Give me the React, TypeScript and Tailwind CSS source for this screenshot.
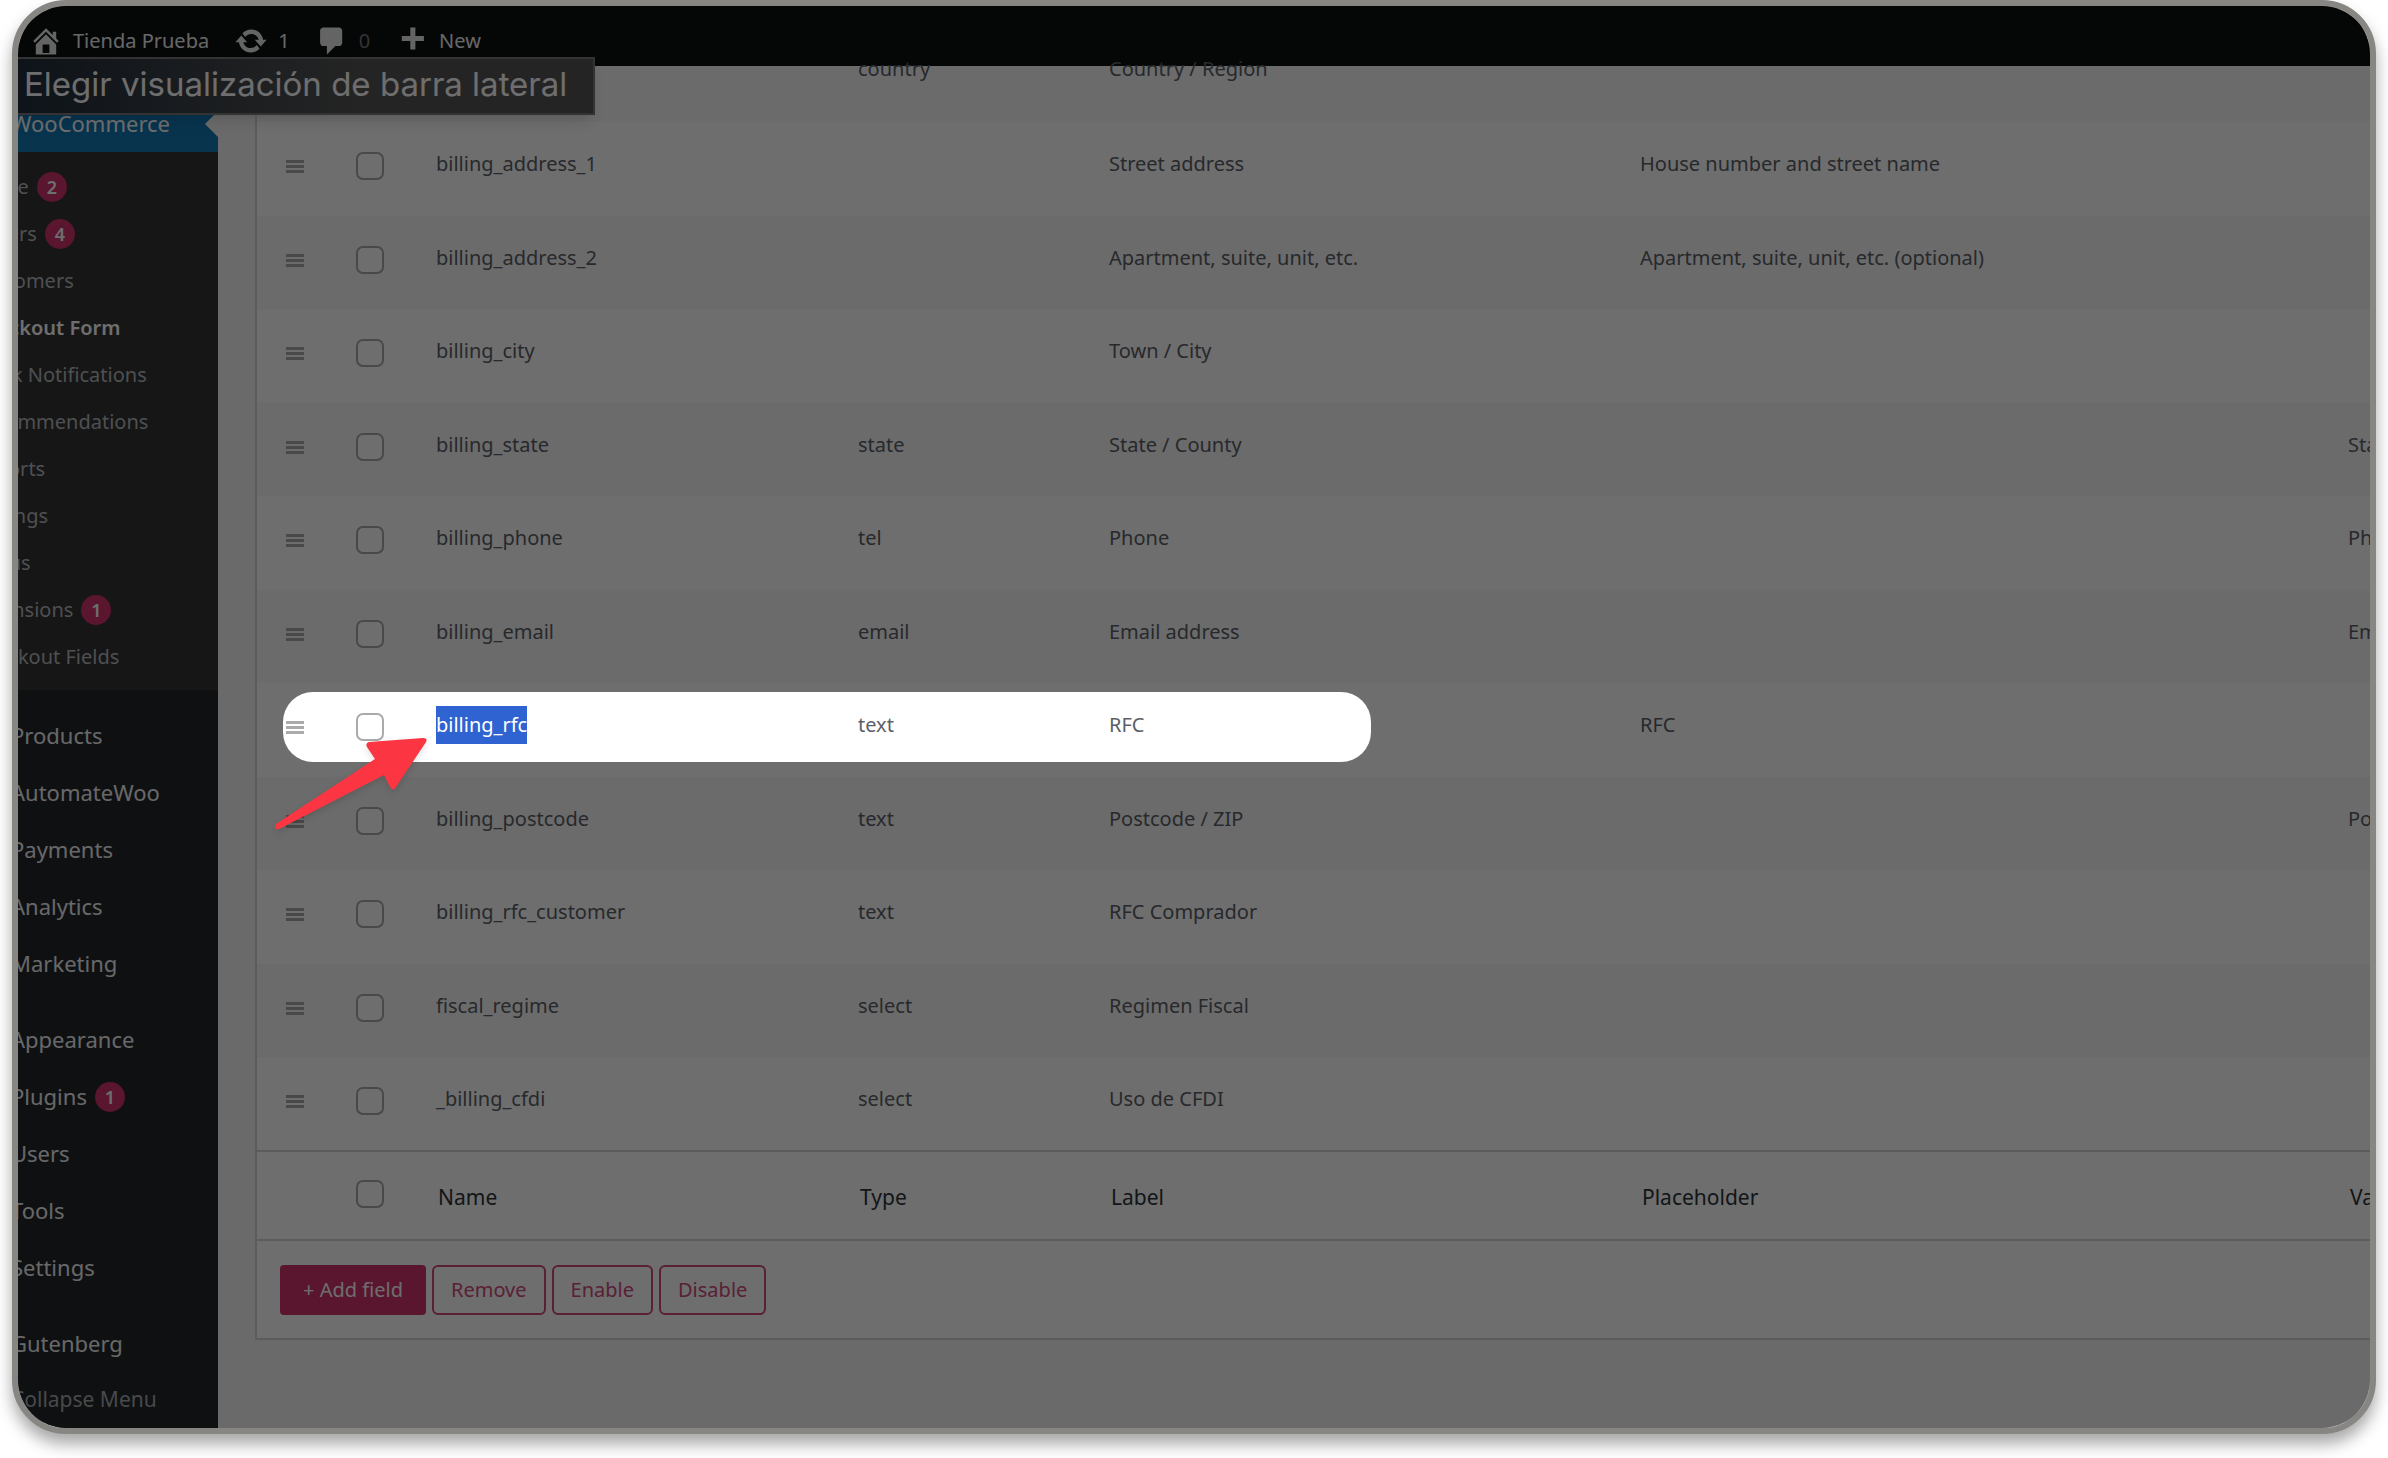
import type { ReactNode } from 'react';
import clsx from 'clsx';

interface Field { name: string; type?: string; label: string; placeholder?: string; validation?: string; }
interface MenuItem { label: string; count?: number; current?: boolean; }

const FIELDS: Field[] = [
  { name: 'billing_address_1', label: 'Street address', placeholder: 'House number and street name' },
  { name: 'billing_address_2', label: 'Apartment, suite, unit, etc.', placeholder: 'Apartment, suite, unit, etc. (optional)' },
  { name: 'billing_city', label: 'Town / City' },
  { name: 'billing_state', type: 'state', label: 'State / County', validation: 'State' },
  { name: 'billing_phone', type: 'tel', label: 'Phone', validation: 'Phone' },
  { name: 'billing_email', type: 'email', label: 'Email address', validation: 'Email' },
  { name: 'billing_rfc', type: 'text', label: 'RFC', placeholder: 'RFC' },
  { name: 'billing_postcode', type: 'text', label: 'Postcode / ZIP', validation: 'Postcode' },
  { name: 'billing_rfc_customer', type: 'text', label: 'RFC Comprador' },
  { name: 'fiscal_regime', type: 'select', label: 'Regimen Fiscal' },
  { name: '_billing_cfdi', type: 'select', label: 'Uso de CFDI' },
];

const SUBMENU: MenuItem[] = [
  { label: 'Home', count: 2 },
  { label: 'Orders', count: 4 },
  { label: 'Customers' },
  { label: 'Checkout Form', current: true },
  { label: 'Stock Notifications' },
  { label: 'Recommendations' },
  { label: 'Reports' },
  { label: 'Settings' },
  { label: 'Status' },
  { label: 'Extensions', count: 1 },
  { label: 'Checkout Fields' },
];

const MENU: MenuItem[][] = [
  [{ label: 'Products' }, { label: 'AutomateWoo' }, { label: 'Payments' }, { label: 'Analytics' }, { label: 'Marketing' }],
  [{ label: 'Appearance' }, { label: 'Plugins', count: 1 }, { label: 'Users' }, { label: 'Tools' }, { label: 'Settings' }],
];

const ICONS = {
  home: 'M16 8.5l1.53 1.53-1.06 1.06L10 4.6l-6.47 6.49-1.06-1.06L10 2.5l4 4v-2h2v4zm-6-2.46l6 5.99V18H4v-5.97zM12 17v-5H8v5h4z',
  update: 'M10.2 3.28c3.53 0 6.43 2.61 6.92 6h2.08l-3.5 4-3.5-4h2.32c-.45-1.97-2.21-3.45-4.32-3.45-1.45 0-2.73.71-3.54 1.78L4.95 5.66C6.23 4.2 8.11 3.28 10.2 3.28zm-.4 13.44c-3.52 0-6.43-2.61-6.92-6H.8l3.5-4c1.17 1.33 2.33 2.67 3.5 4H5.48c.45 1.97 2.21 3.45 4.32 3.45 1.45 0 2.73-.71 3.54-1.78l1.71 1.95c-1.28 1.46-3.15 2.38-5.25 2.38z',
  comment: 'M5 2h9c1.1 0 2 .9 2 2v7c0 1.1-.9 2-2 2h-2l-5 5v-5H5c-1.1 0-2-.9-2-2V4c0-1.1.9-2 2-2z',
  plus: 'M17 7v3h-5v5H9v-5H4V7h5V2h3v5h5z',
};

function BarLink({ icon, dim, children }: { icon: string; dim?: boolean; children: ReactNode }) {
  return (
    <a href="#" className="flex items-center gap-2.5">
      <svg viewBox="0 0 20 20" className="size-[34px] fill-[#e8e8e8]"><path d={icon} /></svg>
      <span className={dim ? 'text-[#777]' : undefined}>{children}</span>
    </a>
  );
}

function AdminBar() {
  return (
    <header className="flex h-[60px] shrink-0 items-center gap-[25px] bg-[#0c1010] pt-2.5 pl-[11px] text-xl text-[#eee]">
      <BarLink icon={ICONS.home}>Tienda Prueba</BarLink>
      <BarLink icon={ICONS.update}>1</BarLink>
      <BarLink icon={ICONS.comment} dim>0</BarLink>
      <BarLink icon={ICONS.plus}>New</BarLink>
    </header>
  );
}

function Count({ value }: { value: number }) {
  return (
    <span className="flex size-[30px] items-center justify-center rounded-full bg-[#d1316d] text-lg font-semibold text-white">
      {value}
    </span>
  );
}

function MainLink({ item }: { item: MenuItem }) {
  return (
    <li>
      <a href="#" className="-ml-[7px] flex h-[57px] items-center gap-2 text-[22px] text-[#f0f0f1]">
        {item.label}
        {item.count && <Count value={item.count} />}
      </a>
    </li>
  );
}

function Sidebar() {
  return (
    <nav className="w-[200px] shrink-0 overflow-hidden bg-[#22262b] pt-[29px] whitespace-nowrap">
      <a href="#" className="flex h-[57px] items-center justify-between bg-[#1378b5] text-[22px] text-white">
        <span className="-ml-[7px]">WooCommerce</span>
        <svg viewBox="0 0 13 26" className="h-[26px] w-[13px] fill-[#f6f6f6]"><path d="M13 0v26L0 13z" /></svg>
      </a>
      <ul className="bg-[#333] pt-[11px] pb-2.5 text-xl text-[#b4b9be]">
        {SUBMENU.map(item => (
          <li key={item.label}>
            <a href="#" className={clsx('-ml-[46px] flex h-[47px] items-center gap-2', item.current && 'font-semibold text-white')}>
              {item.label}
              {item.count && <Count value={item.count} />}
            </a>
          </li>
        ))}
      </ul>
      <div className="flex flex-col gap-[19px] pt-[17px]">
        {MENU.map(group => (
          <ul key={group[0].label}>
            {group.map(item => <MainLink key={item.label} item={item} />)}
          </ul>
        ))}
        <ul>
          <MainLink item={{ label: 'Gutenberg' }} />
          <li>
            <button type="button" className="-ml-[7px] flex h-14 items-center text-[21px] text-[#a7aaad]">Collapse Menu</button>
          </li>
        </ul>
      </div>
    </nav>
  );
}

function Tick({ label }: { label: string }) {
  return (
    <input
      type="checkbox"
      aria-label={label}
      className="block size-7 appearance-none rounded-[7px] border-2 border-[#aaa] bg-white"
    />
  );
}

function FieldRow({ field }: { field: Field }) {
  const selected = field.name === 'billing_rfc';
  return (
    <tr className="h-[94px] bg-white even:h-[93px] even:bg-[#f8f8f8]">
      <td className="relative pt-[38px] pl-[29px]">
        <svg viewBox="0 0 18 13" className="h-[13px] w-[18px] fill-[#aaa]">
          <path d="M0 0h18v3H0zM0 5h18v3H0zM0 10h18v3H0z" />
        </svg>
        {selected && <Spotlight />}
      </td>
      <td className="pt-[30px] pl-5"><Tick label={field.name} /></td>
      <td className="pt-[23px] pl-5">
        {selected ? <mark className="inline-block bg-[#2f63d2] text-white">{field.name}</mark> : field.name}
      </td>
      <td className="pt-[23px] pl-5">{field.type}</td>
      <td className="pt-[23px] pl-5">{field.label}</td>
      <td className="pt-[23px] pl-5">{field.placeholder}</td>
      <td className="pt-[23px] pl-5">{field.validation}</td>
    </tr>
  );
}

// Dims everything but the pill; the frame clips the shadow
function Spotlight() {
  return (
    <>
      <div className="pointer-events-none absolute top-[9px] left-[26px] z-20 h-[70px] w-[1088px] rounded-[30px] shadow-[0_0_0_3000px_rgba(0,0,0,0.57)]" />
      <svg viewBox="0 0 160 100" className="pointer-events-none absolute top-[50px] left-[13px] z-30 h-[100px] w-40 max-w-none drop-shadow-md">
        <path
          d="M6 91 L105 26 L97 14 Q95 10 99 9 L153 5 Q158 5 156 9 L126 54 Q123 59 120 54 L114 42 L9 96 Q3 97 6 91 Z"
          fill="#fb3541"
        />
      </svg>
    </>
  );
}

function FieldsTable() {
  return (
    <table className="w-full table-fixed text-left text-xl leading-[38px] whitespace-nowrap text-[#5b6067]">
      <colgroup>
        <col className="w-[79px]" />
        <col className="w-20" />
        <col className="w-[422px]" />
        <col className="w-[251px]" />
        <col className="w-[531px]" />
        <col />
        <col className="w-[42px]" />
      </colgroup>
      <tbody className="align-top">
        <tr className="h-14 bg-[#f8f8f8]">
          <td colSpan={3} />
          <td className="pl-5"><div className="-mt-4">country</div></td>
          <td className="pl-5"><div className="-mt-4">Country / Region</div></td>
          <td colSpan={2} />
        </tr>
      </tbody>
      <tbody className="align-top">
        {FIELDS.map(field => <FieldRow key={field.name} field={field} />)}
      </tbody>
      <tfoot className="align-top text-[21px] text-[#2c3338]">
        <tr className="h-[89px] border-y-2 border-[#d5d5d7]">
          <td />
          <td className="pt-7 pl-5"><Tick label="Select all" /></td>
          {['Name', 'Type', 'Label', 'Placeholder', 'Validations'].map(title => (
            <th key={title} scope="col" className="pt-[26px] pl-[22px] font-normal">{title}</th>
          ))}
        </tr>
      </tfoot>
    </table>
  );
}

const outline = 'h-[50px] rounded-md border-2 border-[#cf4a7d] px-[17px] text-[#cf4a7d]';

export default function App() {
  return (
    <div className="flex min-h-screen bg-white px-3 pb-6 font-['Noto_Sans','Open_Sans',sans-serif]">
      <div className="relative flex min-w-0 flex-1 flex-col overflow-hidden rounded-[54px] border-6 border-[#888683] bg-[#f6f6f6] shadow-[0_10px_16px_rgba(0,0,0,0.35)]">
        <AdminBar />
        <div className="flex flex-1">
          <Sidebar />
          <main className="min-w-0 flex-1 pl-[37px]">
            <section className="border-b-2 border-l-2 border-[#d5d5d7] bg-white">
              <FieldsTable />
              <div className="flex gap-1.5 pt-6 pb-[23px] pl-[23px] text-xl">
                <button type="button" className="h-[50px] rounded bg-[#d1316d] px-[23px] text-white">+ Add field</button>
                <button type="button" className={outline}>Remove</button>
                <button type="button" className={outline}>Enable</button>
                <button type="button" className={outline}>Disable</button>
              </div>
            </section>
          </main>
        </div>
        <div role="tooltip" className="absolute top-[51px] left-0 z-10 flex h-[58px] items-center border-2 border-l-0 border-[#777] bg-linear-to-r from-[#222e3c] to-[#555] to-60% pr-[26px] pb-0.5 pl-1.5 font-['Inter',sans-serif] text-[33px] text-white shadow-lg">
          Elegir visualización de barra lateral
        </div>
      </div>
    </div>
  );
}
